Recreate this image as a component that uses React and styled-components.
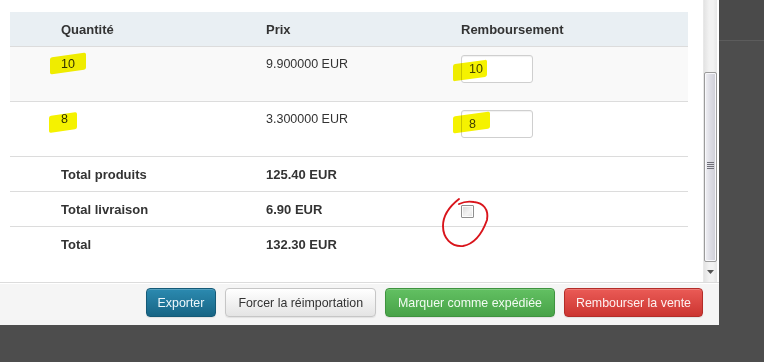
import React from "react";
import styled, { createGlobalStyle } from "styled-components";

const Global = createGlobalStyle`
  html, body {
    margin: 0;
    padding: 0;
    background: #4d4d4d;
    font-family: "Liberation Sans", Arial, sans-serif;
    color: #333;
  }
  * { box-sizing: border-box; }
`;

const Page = styled.div`
  display: flex;
  width: 764px;
  height: 362px;
  overflow: hidden;
`;

const Modal = styled.div`
  width: 719px;
  height: 325px;
  background: #fff;
  display: flex;
  flex-direction: column;
`;

const Side = styled.div`
  flex: 1;
`;

const SideBand = styled.div`
  height: 41px;
  background: #4a4a4a;
  border-bottom: 1px solid #5c5c5c;
`;

const Body = styled.div`
  display: flex;
  height: 282px;
`;

const Content = styled.div`
  flex: 1;
  padding: 12px 15px 0 10px;
`;

const Table = styled.div`
  width: 678px;
`;

const Row = styled.div`
  display: grid;
  grid-template-columns: 205px 195px 1fr;
  padding-left: 51px;
  height: ${(p) => p.$height}px;
  background: ${(p) => p.$bg || "#fff"};
  border-bottom: ${(p) => (p.$last ? "none" : "1px solid #dcdcdc")};
`;

const Cell = styled.div`
  position: relative;
  display: flex;
  align-items: ${(p) => (p.$top ? "flex-start" : "center")};
  padding-top: ${(p) => (p.$top ? "9px" : "1px")};
  font-size: ${(p) => (p.$bold ? "13px" : "12.5px")};
  font-weight: ${(p) => (p.$bold ? "bold" : "normal")};
  line-height: 16px;
  color: #333;
`;

const QtyInput = styled.input`
  width: 72px;
  height: 28px;
  margin: -1px 0 0 0;
  border: 1px solid #cfcfcf;
  border-radius: 3px;
  padding: 0 0 0 7px;
  font-family: inherit;
  font-size: 12.5px;
  color: #444;
  background: #fff;
  box-shadow: inset 0 1px 1px rgba(0, 0, 0, 0.06);
`;

const Highlight = styled.span`
  position: absolute;
  left: ${(p) => p.$left}px;
  top: ${(p) => p.$top}px;
  width: ${(p) => p.$width}px;
  height: 17px;
  background: #f5f200;
  border-radius: 2px;
  transform: skewY(-8deg);
  mix-blend-mode: multiply;
  pointer-events: none;
`;

const Check = styled.input`
  appearance: none;
  width: 13px;
  height: 13px;
  margin: 4px 0 0 0;
  border: 1px solid #8f8f8f;
  border-radius: 1px;
  background: linear-gradient(135deg, #d8d8d8, #f4f4f4 60%, #e0e0e0);
  box-shadow: inset 0 0 0 1px #fdfdfd;
`;

const Scribble = styled.svg`
  position: absolute;
  left: -23px;
  top: 4px;
  overflow: visible;
`;

const Scrollbar = styled.div`
  width: 15px;
  margin-right: 2px;
  display: flex;
  flex-direction: column;
  background: linear-gradient(to right, #e3e3e3, #f2f2f2 40%, #f2f2f2 70%, #e6e6e6);
  border-left: 1px solid #e8e8e8;
`;

const TrackGap = styled.div`
  height: 72px;
`;

const Thumb = styled.div`
  height: 190px;
  border: 1px solid #9b9b9b;
  border-radius: 2px;
  background: linear-gradient(to right, #f0f0f4, #dcdce4 50%, #cfcfd8);
  box-shadow: inset 0 0 0 1px #f8f8fb;
  display: flex;
  align-items: center;
  justify-content: center;
  padding-bottom: 3px;
`;

const ArrowButton = styled.div`
  flex: 1;
  display: flex;
  align-items: center;
  justify-content: center;
`;

const Footer = styled.div`
  flex: 1;
  border-top: 1px solid #dcdcdc;
  box-shadow: inset 0 1px 0 #fff;
  background: #f5f5f5;
  display: flex;
  justify-content: flex-end;
  align-items: flex-start;
  gap: 9px;
  padding: 5px 16px 0 0;
`;

const palette = {
  info: { top: "#2b8ab0", bottom: "#186585", border: "#155a77", color: "#eef7fb" },
  default: { top: "#ffffff", bottom: "#e4e4e4", border: "#c6c6c6", color: "#333" },
  success: { top: "#62c062", bottom: "#48a348", border: "#3f933f", color: "#f1fbf1" },
  danger: { top: "#ea5b56", bottom: "#cc3531", border: "#b32d29", color: "#fdf1f0" },
};

const Button = styled.button`
  height: 29px;
  padding: 0 ${(p) => p.$pad}px;
  font-family: inherit;
  font-size: 12.4px;
  border-radius: 4px;
  border: 1px solid ${(p) => palette[p.$kind].border};
  background: linear-gradient(${(p) => palette[p.$kind].top}, ${(p) => palette[p.$kind].bottom});
  color: ${(p) => palette[p.$kind].color};
  box-shadow: inset 0 1px 0 rgba(255, 255, 255, 0.2), 0 1px 1px rgba(0, 0, 0, 0.08);
  white-space: nowrap;
`;

const items = [
  { qty: "10", price: "9.900000 EUR", mark: { left: -11, top: 8, width: 36 }, inMark: { left: -8, top: 15, width: 34 }, bg: "#f9f9f9" },
  { qty: "8", price: "3.300000 EUR", mark: { left: -12, top: 12, width: 28 }, inMark: { left: -8, top: 12, width: 37 }, bg: "#fff" },
];

export default function App() {
  return (
    <>
      <Global />
      <Page>
        <Modal>
          <Body>
            <Content>
              <Table>
                <Row $height={35} $bg="#e9eff3">
                  <Cell $bold>Quantité</Cell>
                  <Cell $bold>Prix</Cell>
                  <Cell $bold>Remboursement</Cell>
                </Row>
                {items.map((it) => (
                  <Row key={it.qty} $height={55} $bg={it.bg}>
                    <Cell $top>
                      {it.qty}
                      <Highlight $left={it.mark.left} $top={it.mark.top} $width={it.mark.width} />
                    </Cell>
                    <Cell $top>{it.price}</Cell>
                    <Cell $top>
                      <QtyInput defaultValue={it.qty} />
                      <Highlight $left={it.inMark.left} $top={it.inMark.top} $width={it.inMark.width} />
                    </Cell>
                  </Row>
                ))}
                <Row $height={35}>
                  <Cell $bold>Total produits</Cell>
                  <Cell $bold>125.40 EUR</Cell>
                  <Cell />
                </Row>
                <Row $height={35}>
                  <Cell $bold>Total livraison</Cell>
                  <Cell $bold>6.90 EUR</Cell>
                  <Cell>
                    <Check type="checkbox" />
                    <Scribble width="54" height="56" viewBox="0 0 54 56">
                      <path
                        d="M21 3 C12 10, 5 20, 5 30 C5 42, 13 51, 25 50 C36 48, 44 38, 49 24 C51 13, 45 7, 36 6 C30 5, 25 6, 21 8"
                        fill="none"
                        stroke="#d9141b"
                        strokeWidth="1.9"
                        strokeLinecap="round"
                      />
                    </Scribble>
                  </Cell>
                </Row>
                <Row $height={35} $last>
                  <Cell $bold>Total</Cell>
                  <Cell $bold>132.30 EUR</Cell>
                  <Cell />
                </Row>
              </Table>
            </Content>
            <Scrollbar>
              <TrackGap />
              <Thumb>
                <svg width="7" height="8" viewBox="0 0 7 8">
                  <path d="M0 0.5H7M0 2.5H7M0 4.5H7M0 6.5H7" stroke="#6f6f78" strokeWidth="1" />
                </svg>
              </Thumb>
              <ArrowButton>
                <svg width="7" height="4" viewBox="0 0 7 4">
                  <path d="M0 0H7L3.5 4Z" fill="#555" />
                </svg>
              </ArrowButton>
            </Scrollbar>
          </Body>
          <Footer>
            <Button $kind="info" $pad={11}>Exporter</Button>
            <Button $kind="default" $pad={12}>Forcer la réimportation</Button>
            <Button $kind="success" $pad={12}>Marquer comme expédiée</Button>
            <Button $kind="danger" $pad={11}>Rembourser la vente</Button>
          </Footer>
        </Modal>
        <Side>
          <SideBand />
        </Side>
      </Page>
    </>
  );
}
